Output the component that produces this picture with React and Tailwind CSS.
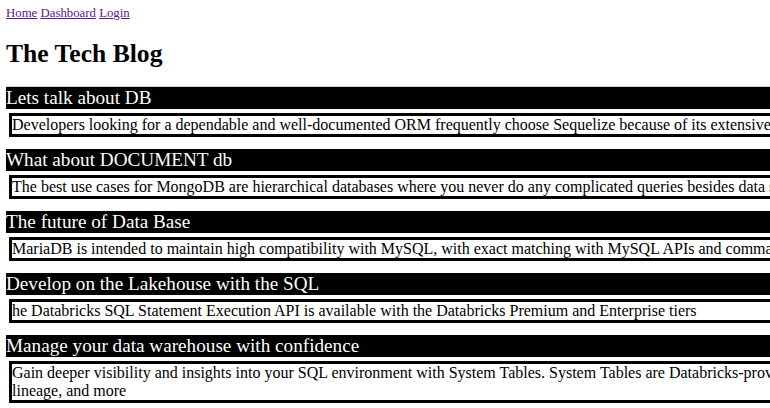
const posts = [
    {
        title: "Lets talk about DB",
        body: "Developers looking for a dependable and well-documented ORM frequently choose Sequelize because of its extensive feature set and support for many SQL dialects.",
    },
    {
        title: "What about DOCUMENT db",
        body: "The best use cases for MongoDB are hierarchical databases where you never do any complicated queries besides data storage and retrieval.",
    },
    {
        title: "The future of Data Base",
        body: "MariaDB is intended to maintain high compatibility with MySQL, with exact matching with MySQL APIs and commands.",
    },
    {
        title: "Develop on the Lakehouse with the SQL",
        body: "he Databricks SQL Statement Execution API is available with the Databricks Premium and Enterprise tiers",
    },
    {
        title: "Manage your data warehouse with confidence",
        body: (
            <>
                Gain deeper visibility and insights into your SQL environment with System Tables. System Tables are Databricks-provided tables of operational data, covering audit, billing,
                <br />
                lineage, and more
            </>
        ),
    },
];

export default function App() {
    return (
        <div className="w-full h-screen overflow-hidden bg-white">
            <div className="w-[1200px] pl-[6px] font-['Liberation_Serif','Times_New_Roman',serif] text-[12.8px] text-black">

                {/* Nav */}
                <nav className="pt-[6px] leading-[14px]">
                    <a href="#" className="text-[#551a8b] underline">Home</a>{" "}
                    <a href="#" className="text-[#551a8b] underline">Dashboard</a>{" "}
                    <a href="#" className="text-[#551a8b] underline">Login</a>
                </nav>

                <h1 className="mt-[19.5px] text-[25.6px] leading-[28px] font-bold">The Tech Blog</h1>

                <hr className="mt-[18px] border-t border-[#cfcfcf]" />

                {/* Posts */}
                <div>
                    {posts.map((p) => (
                        <div key={p.title} className="mb-[12px]">
                            <h2 className="bg-black text-white text-[19.2px] leading-[22px]">{p.title}</h2>
                            <div className="mt-[4px] ml-[3px] border-[3px] border-black text-[16px] leading-[18px]">
                                {p.body}
                            </div>
                        </div>
                    ))}
                </div>
            </div>
        </div>
    );
}
